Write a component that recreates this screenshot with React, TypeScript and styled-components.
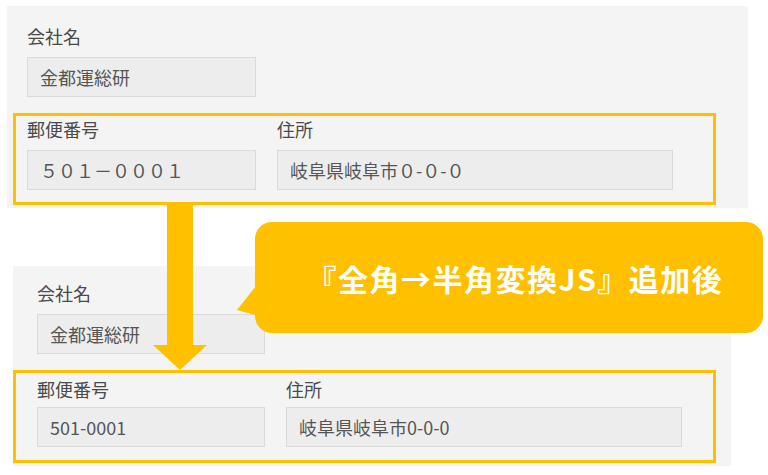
import React from "react";
import styled, { createGlobalStyle } from "styled-components";

const GlobalStyle = createGlobalStyle`
  html, body { margin: 0; padding: 0; background: #ffffff; }
  body { font-family: "Noto Sans CJK JP", "Noto Sans", sans-serif; }
`;

const Page = styled.div`
  position: relative;
  width: 768px;
  height: 475px;
  overflow: hidden;
  padding-top: 6px;
  box-sizing: border-box;
  display: flex;
  flex-direction: column;
  gap: 58px;
`;

const Panel = styled.section<{ $left: number; $width: number; $boxInset: number; $padTop: number }>`
  margin-left: ${(p) => p.$left}px;
  width: ${(p) => p.$width}px;
  background: #f4f4f4;
  padding: ${(p) => p.$padTop}px 0 3px ${(p) => p.$boxInset}px;
  box-sizing: border-box;
  display: flex;
  flex-direction: column;
  gap: 16px;
`;

const Field = styled.div<{ $gap: number; $indent?: number }>`
  display: flex;
  flex-direction: column;
  gap: ${(p) => p.$gap}px;
  margin-left: ${(p) => p.$indent ?? 0}px;
`;

const Label = styled.div`
  font-size: 18px;
  line-height: 24px;
  height: 24px;
  color: #4a4a4a;
  white-space: nowrap;
`;

const Input = styled.div<{ $width: number; $spacing?: number }>`
  width: ${(p) => p.$width}px;
  height: 40px;
  box-sizing: border-box;
  background: #ededed;
  border: 1px solid #dadada;
  padding-left: 12px;
  font-size: 18px;
  line-height: 38px;
  color: #555555;
  white-space: nowrap;
  letter-spacing: ${(p) => p.$spacing ?? 0}px;
`;

const HighlightBox = styled.div<{ $padTop: number; $padLeft: number; $padBottom: number }>`
  width: 703px;
  box-sizing: border-box;
  border: 3px solid #ffc000;
  padding: ${(p) => p.$padTop}px 0 ${(p) => p.$padBottom}px ${(p) => p.$padLeft}px;
  display: flex;
  gap: 21px;
`;

const Arrow = styled.svg`
  position: absolute;
  left: 153px;
  top: 203px;
  width: 54px;
  height: 167px;
`;

const Callout = styled.div`
  position: absolute;
  left: 255px;
  top: 222px;
  width: 508px;
  height: 111px;
  box-sizing: border-box;
  border-radius: 17px;
  background: #ffc000;
  display: flex;
  align-items: center;
  justify-content: center;
  padding-left: 12px;
  color: #ffffff;
  font-size: 30px;
  font-weight: 700;
  letter-spacing: 1.5px;
  white-space: nowrap;

  &::before {
    content: "";
    position: absolute;
    left: -18px;
    top: 64px;
    width: 24px;
    height: 30px;
    background: #ffc000;
    clip-path: polygon(19px 0, 0 24px, 22px 30px, 24px 30px, 24px 0);
  }
`;

export default function App() {
  return (
    <>
      <GlobalStyle />
      <Page>
        <Panel $left={7} $width={741} $boxInset={6} $padTop={18}>
          <Field $gap={9} $indent={14}>
            <Label>会社名</Label>
            <Input $width={229}>金都運総研</Input>
          </Field>
          <HighlightBox $padTop={1} $padLeft={11} $padBottom={12}>
            <Field $gap={9}>
              <Label>郵便番号</Label>
              <Input $width={229} $spacing={0}>５０１－０００１</Input>
            </Field>
            <Field $gap={9}>
              <Label>住所</Label>
              <Input $width={396}>岐阜県岐阜市０-０-０</Input>
            </Field>
          </HighlightBox>
        </Panel>

        <Panel $left={13} $width={718} $boxInset={0} $padTop={15}>
          <Field $gap={9} $indent={24}>
            <Label>会社名</Label>
            <Input $width={228}>金都運総研</Input>
          </Field>
          <HighlightBox $padTop={4} $padLeft={21} $padBottom={13}>
            <Field $gap={6}>
              <Label>郵便番号</Label>
              <Input $width={228}>501-0001</Input>
            </Field>
            <Field $gap={6}>
              <Label>住所</Label>
              <Input $width={396}>岐阜県岐阜市0-0-0</Input>
            </Field>
          </HighlightBox>
        </Panel>

        <Arrow viewBox="0 0 54 167">
          <rect x="14" y="0" width="26" height="143" fill="#ffc000" />
          <polygon points="0,142 54,142 27,167" fill="#ffc000" />
        </Arrow>

        <Callout>『全角→半角変換JS』追加後</Callout>
      </Page>
    </>
  );
}
